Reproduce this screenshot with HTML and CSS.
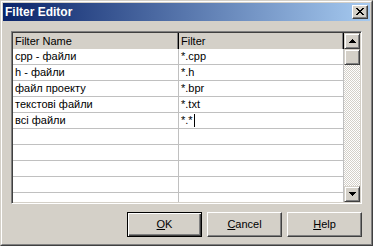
FILE: index.html
```html
<!DOCTYPE html>
<html>
<head>
<meta charset="utf-8">
<link rel="stylesheet" href="styles.css">
</head>
<body>
<div class="window">
  <div class="frame">
    <div class="titlebar">
      <span class="title">Filter Editor</span>
      <div class="close">
        <svg width="8" height="7" viewBox="0 0 8 7"><path d="M0 0h2v1h-2z M6 0h2v1h-2z M1 1h2v1h-2z M5 1h2v1h-2z M2 2h4v1h-4z M3 3h2v1h-2z M2 4h4v1h-4z M1 5h2v1h-2z M5 5h2v1h-2z M0 6h2v1h-2z M6 6h2v1h-2z" fill="#000"/></svg>
      </div>
    </div>
    <div class="content">
      <div class="grid">
        <div class="table">
          <div class="row hdr"><div class="cell c1">Filter Name</div><div class="cell c2">Filter</div></div>
          <div class="row"><div class="cell c1">cpp - файли</div><div class="cell c2">*.cpp</div></div>
          <div class="row"><div class="cell c1">h - файли</div><div class="cell c2">*.h</div></div>
          <div class="row"><div class="cell c1">файл проекту</div><div class="cell c2">*.bpr</div></div>
          <div class="row"><div class="cell c1">текстові файли</div><div class="cell c2">*.txt</div></div>
          <div class="row"><div class="cell c1">всі файли</div><div class="cell c2">*.*<span class="caret"></span></div></div>
          <div class="row"><div class="cell c1"></div><div class="cell c2"></div></div>
          <div class="row"><div class="cell c1"></div><div class="cell c2"></div></div>
          <div class="row"><div class="cell c1"></div><div class="cell c2"></div></div>
          <div class="row"><div class="cell c1"></div><div class="cell c2"></div></div>
          <div class="row"><div class="cell c1"></div><div class="cell c2"></div></div>
        </div>
        <div class="scrollbar">
          <div class="sbtn"><svg width="7" height="4" viewBox="0 0 7 4"><path d="M3 0h1v1h-1z M2 1h3v1h-3z M1 2h5v1h-5z M0 3h7v1h-7z" fill="#000"/></svg></div>
          <div class="sbtn thumb"></div>
          <div class="track"></div>
          <div class="sbtn"><svg width="7" height="4" viewBox="0 0 7 4"><path d="M0 0h7v1h-7z M1 1h5v1h-5z M2 2h3v1h-3z M3 3h1v1h-1z" fill="#000"/></svg></div>
        </div>
      </div>
      <div class="buttons">
        <div class="btn default"><span class="face"><u>O</u>K</span></div>
        <div class="btn"><span class="face"><u>C</u>ancel</span></div>
        <div class="btn"><span class="face"><u>H</u>elp</span></div>
      </div>
    </div>
  </div>
</div>
</body>
</html>
```

FILE: styles.css
```css
* { box-sizing: border-box; }
html, body { margin: 0; padding: 0; background: #d4d0c8; }
body {
  font-family: "Liberation Sans", Arial, sans-serif;
  font-size: 11px;
  color: #000;
}
.window {
  width: 373px;
  height: 246px;
  border: 1px solid;
  border-color: #d4d0c8 #404040 #404040 #d4d0c8;
  background: #d4d0c8;
}
.frame {
  height: 100%;
  border: 1px solid;
  border-color: #fff #808080 #808080 #fff;
  padding: 1px;
  display: flex;
  flex-direction: column;
}
.titlebar {
  height: 18px;
  background: linear-gradient(to right, #0a246a, #a6caf0);
  display: flex;
  align-items: center;
  justify-content: space-between;
  padding: 0 2px 0 2px;
}
.title {
  color: #fff;
  font-weight: bold;
  font-size: 12px;
  line-height: 18px;
}
.close {
  width: 16px;
  height: 14px;
  background: #d4d0c8;
  border: 1px solid;
  border-color: #fff #404040 #404040 #fff;
  box-shadow: inset -1px -1px #808080;
  display: flex;
  align-items: center;
  justify-content: center;
  padding-right: 1px;
  padding-bottom: 1px;
}
.close svg, .sbtn svg { display: block; }
.content {
  flex: 1;
  padding: 10px 8px 6px 8px;
  display: flex;
  flex-direction: column;
}
.grid {
  width: 351px;
  height: 173px;
  border: 1px solid;
  border-color: #808080 #fff #fff #808080;
  box-shadow: inset 1px 1px #404040, inset -1px -1px #d4d0c8;
  padding: 1px;
  display: flex;
}
.table {
  width: 331px;
  background: #fff;
  overflow: hidden;
}
.row {
  display: flex;
  height: 16px;
  border-bottom: 1px solid #c0c0c0;
}
.cell {
  height: 15px;
  line-height: 15px;
  padding-left: 2px;
  white-space: nowrap;
  border-right: 1px solid #c0c0c0;
}
.c1 { width: 166px; }
.c2 { width: 165px; }
.hdr {
  background: #d4d0c8;
  border-bottom: none;
}
.hdr .cell {
  height: 16px;
  line-height: 16px;
  border-right: 1px solid #000;
  box-shadow: inset -1px 0 #808080;
}
.caret {
  display: inline-block;
  width: 1px;
  height: 13px;
  background: #000;
  vertical-align: -3px;
  margin-left: 1px;
}
.scrollbar {
  width: 16px;
  display: flex;
  flex-direction: column;
  background: repeating-conic-gradient(#d4d0c8 0 25%, #fff 0 50%) 0 0 / 2px 2px;
}
.sbtn {
  width: 16px;
  height: 16px;
  flex: none;
  background: #d4d0c8;
  border: 1px solid;
  border-color: #d4d0c8 #404040 #404040 #d4d0c8;
  box-shadow: inset 1px 1px #fff, inset -1px -1px #808080;
  display: flex;
  align-items: center;
  justify-content: center;
}
.track { flex: 1; }
.buttons {
  margin-top: 8px;
  display: flex;
  justify-content: flex-end;
  gap: 5px;
  width: 351px;
}
.btn {
  width: 75px;
  height: 25px;
  background: #d4d0c8;
  border: 1px solid;
  border-color: #fff #404040 #404040 #fff;
  box-shadow: inset -1px -1px #808080;
  display: flex;
  align-items: center;
  justify-content: center;
}
.btn.default {
  border: 1px solid #000;
  box-shadow: inset 1px 1px #fff, inset -1px -1px #404040, inset -2px -2px #808080;
}
.face {
  line-height: 13px;
  padding-bottom: 1px;
}
.face u { text-decoration-thickness: 1px; text-underline-offset: 1px; }
```
